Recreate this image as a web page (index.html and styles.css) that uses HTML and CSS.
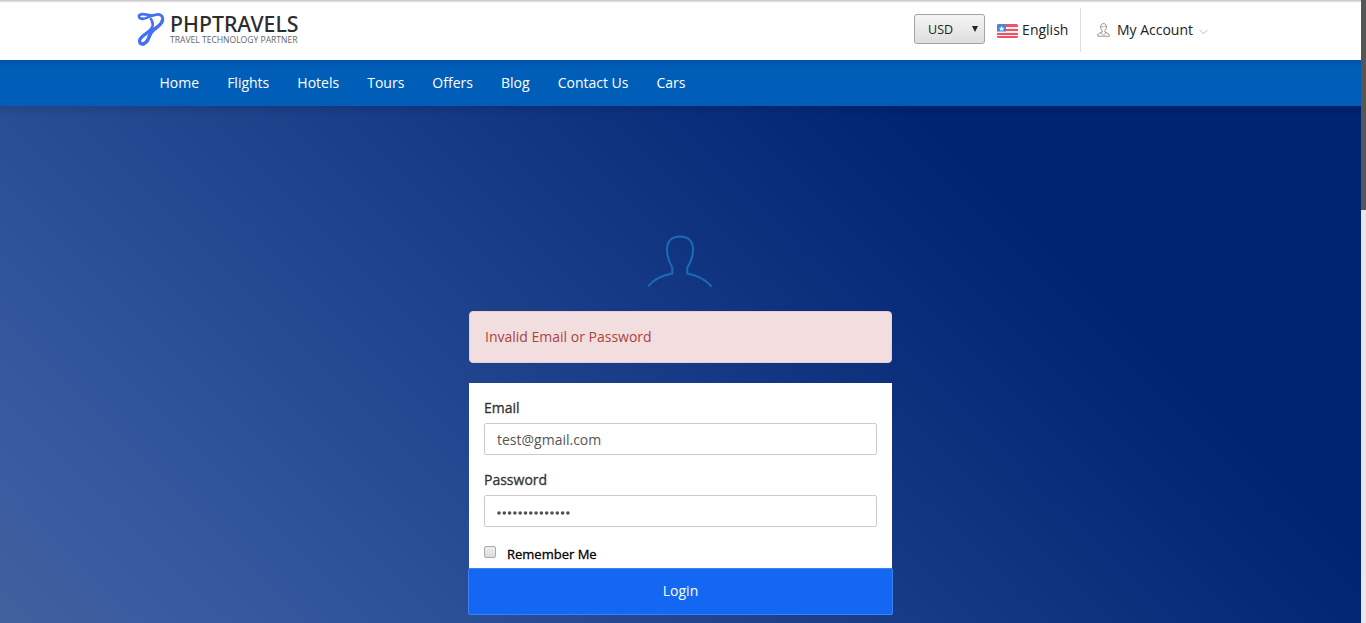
FILE: index.html
```html
<!DOCTYPE html>
<html lang="en">
<head>
<meta charset="utf-8">
<title>Login</title>
<link rel="stylesheet" href="styles.css">
</head>
<body>
<div class="page">
  <header class="topbar">
    <div class="brand">
      <svg class="brand-mark" width="28" height="35" viewBox="0 0 28 35" fill="none" stroke="#456ff5" stroke-linecap="round">
        <path stroke-width="2.800" d="M5.500 6.800C1.400 6.800.8 2.800 4.200 2.300 9 1.600 13.500 4.400 18 3 23 1.300 26.600 4 25.600 8.500"/>
        <path stroke-width="3.600" d="M25.400 8.500C24.400 13.500 18 16 15 19.500 11.500 23 12 30.500 6.500 31.800"/>
        <path stroke-width="2.600" d="M5.500 6.800C9 7.300 12 4 17 3M14 7C15 9 17 12 15 16"/>
        <path stroke-width="3.400" d="M15 16C13.500 20 5.500 22.500 3 27.300 1.700 30 3 32.500 6.500 31.800"/>
      </svg>
      <svg class="brand-text" width="130" height="35" viewBox="0 0 130 35">
        <text class="brand-name" x="0" y="19.500" textLength="128.500" lengthAdjust="spacingAndGlyphs">PHPTRAVELS</text>
        <text class="brand-tag" x="0" y="31.300" textLength="127.500" lengthAdjust="spacingAndGlyphs">TRAVEL TECHNOLOGY PARTNER</text>
      </svg>
    </div>
    <div class="tools">
      <button class="currency"><span>USD</span><i class="arrow"></i></button>
      <a class="language">
        <svg class="flag" width="21" height="14" viewBox="0 0 21 14">
          <rect width="21" height="14" rx="1.500" fill="#ef5366"/>
          <path d="M9 3h12v2H9zM0 7h21v2H0zM0 11h21v1H0z" fill="#f7eef0"/>
          <path d="M1.500 0H9v7.500H0v-6A1.500 1.500 0 0 1 1.500 0Z" fill="#4688df"/>
          <path d="m4.700 2 .8 1.700 1.900.2-1.400 1.300.4 1.800-1.700-.9L3 7l.4-1.800L2 3.900l1.900-.2z" fill="#fff"/>
        </svg>
        <span>English</span>
      </a>
      <a class="account">
        <svg width="13" height="14" viewBox="0 0 13 14" fill="none" stroke="#8b8782" stroke-width=".9">
          <path d="M6.500.6C4.600.6 3.400 2 3.600 4c.2 1.800.8 3 1.500 3.700v1.400L2 10.400C1 11 .6 12 .6 13.200h11.800c0-1.200-.4-2.200-1.400-2.800L7.900 9.100V7.700c.7-.7 1.300-1.900 1.500-3.700.2-2-1-3.400-2.900-3.400Z"/>
          <path d="M4 3.500c1.500.4 3.500.2 5-.5M4 10l2.500 2L9 10" stroke="#b3a48c"/>
        </svg>
        <span>My Account</span>
        <svg class="chevron" width="9" height="6" viewBox="0 0 9 6" fill="none" stroke="#bbb"><path d="M.5.8l4 4 4-4"/></svg>
      </a>
    </div>
  </header>
  <nav class="menu">
    <a>Home</a><a>Flights</a><a>Hotels</a><a>Tours</a><a>Offers</a><a>Blog</a><a>Contact Us</a><a>Cars</a>
  </nav>
  <main class="hero">
    <svg class="avatar" width="66" height="53" viewBox="0 0 66 53" fill="none" stroke="#1b6bb8" stroke-width="2">
      <path d="M1 51.500C6 45 15 40.500 25.300 38.500V32.500C22 27 20 21 20 14.500 20 6 25 1.500 33 1.500S46 6 46 14.500C46 21 44 27 40.300 32.500V38.500C51 40.500 59 45 64.500 51.500"/>
    </svg>
    <div class="alert">Invalid Email or Password</div>
    <form class="card">
      <div class="fields">
        <label class="label">Email</label>
        <input class="input" type="text" value="test@gmail.com">
        <label class="label">Password</label>
        <div class="input dots">
          <svg width="74" height="4" viewBox="0 0 74 4"><path d="M2 2H72" stroke="#505050" stroke-width="3.600" stroke-linecap="round" stroke-dasharray="0 5.300"/></svg>
        </div>
        <div class="remember"><i class="box"></i><span>Remember Me</span></div>
      </div>
      <button class="login" type="button">Login</button>
    </form>
  </main>
</div>
<div class="scrollbar"><div class="thumb"></div></div>
</body>
</html>
```

FILE: styles.css
```css
* { box-sizing: border-box; }
body {
  margin: 0;
  height: 623px;
  display: flex;
  overflow: hidden;
  font: 14px/20px "Open Sans", sans-serif;
  color: #333;
}
.page { width: 1361px; display: flex; flex-direction: column; }
.scrollbar { width: 5px; background: #e8e8e8; }
.thumb { height: 210px; background: #565656; }

.topbar {
  height: 60px;
  padding: 0 153px 0 137px;
  display: flex;
  justify-content: space-between;
  background: linear-gradient(#c8c8c8 0, #d0d0d0 1px, #f4f4f4 2px, #fff 3px);
}
.brand { display: flex; gap: 5px; padding-top: 12px; height: 47px; }
.brand-text { overflow: visible; }
.brand-name { font: 500 22px "Noto Sans", sans-serif; fill: #2d2d2d; }
.brand-tag { font: 400 9px "Open Sans", sans-serif; fill: #666; }

.tools { display: flex; align-items: flex-start; }
.currency {
  width: 71px;
  height: 30px;
  margin: 14px 12px 0 0;
  padding: 1px 6px 0 13.500px;
  display: flex;
  align-items: center;
  justify-content: space-between;
  border: 1px solid #a3a3a3;
  border-radius: 3px;
  background: linear-gradient(#f5f5f5, #dedede);
  font: 12.500px "Open Sans", sans-serif;
  color: #222;
}
.arrow { border: 3px solid transparent; border-top: 6px solid #222; border-bottom: 0; margin-bottom: 2px; }
.language, .account { display: flex; align-items: center; color: #222; }
.language { height: 44px; margin-top: 8px; gap: 4.500px; padding-right: 11.500px; border-right: 1px solid #ddd; }
.flag { margin-top: 1px; }
.account { height: 44px; margin-top: 8px; padding-left: 16px; }
.account span { margin: 0 6px 0 7px; }
.chevron { margin-top: 4px; }

.menu {
  height: 46px;
  padding-left: 159.500px;
  display: flex;
  align-items: center;
  gap: 28.050px;
  color: #fff;
  background: linear-gradient(#0056aa, #005eb8 8px);
}

.hero {
  flex: 1;
  padding-top: 129px;
  display: flex;
  flex-direction: column;
  align-items: center;
  background:
    linear-gradient(rgba(0, 0, 0, .1), transparent 10px),
    linear-gradient(45deg, #40609c 0, #395aa1 10%, #2d5299 22%, #002372 76%);
}
.avatar { margin: 0 1px 23px 0; }
.alert {
  width: 423px;
  height: 52px;
  margin-bottom: 20px;
  padding: 15px;
  border: 1px solid #ebccd1;
  border-radius: 4px;
  background: #f2dede;
  color: #a94442;
}
.card { width: 423px; background: #fff; }
.fields { height: 185px; padding: 15px 15px 0; }
.label { display: block; height: 25px; font-size: 14px; -webkit-text-stroke: .3px #333; }
.input {
  display: block;
  width: 393px;
  height: 32px;
  margin-bottom: 15px;
  padding: 1px 12px 0;
  border: 1px solid #ccc;
  border-radius: 2px;
  font: 14px "Open Sans", sans-serif;
  color: #555;
}
.dots { display: flex; align-items: center; padding-top: 4px; }
.remember { display: flex; gap: 11px; padding-top: 2px; font-size: 13px; color: #000; -webkit-text-stroke: .3px #000; }
.box { width: 12px; height: 12px; margin-top: 2px; border: 1px solid #aaa; border-radius: 2px; background: linear-gradient(#eee, #dcdcdc); }
.login {
  display: block;
  width: 425px;
  height: 47px;
  margin-left: -1px;
  padding: 0 0 2px;
  border: 1px solid #3b82f0;
  border-radius: 2px;
  background: #1367f2;
  color: #fff;
  font: 14px "Open Sans", sans-serif;
}
```
